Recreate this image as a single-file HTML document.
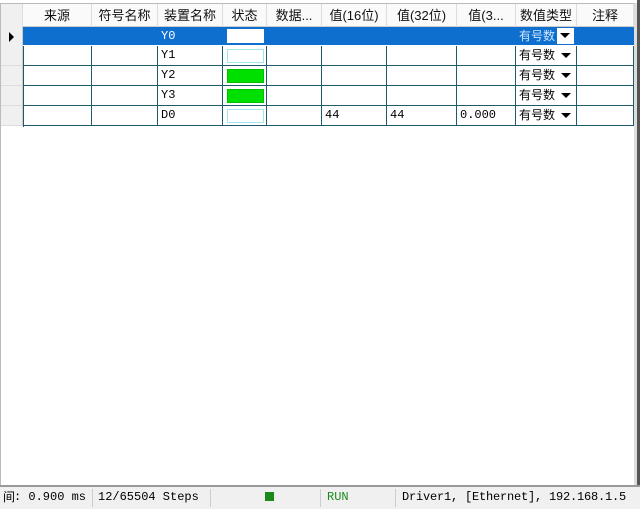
<!DOCTYPE html>
<html><head><meta charset="utf-8"><style>
body{margin:0;width:640px;height:509px;background:#fff;position:relative;overflow:hidden;font-family:"Liberation Mono","Noto Sans CJK SC",monospace;font-size:12px;color:#000}
div{position:absolute;box-sizing:border-box}
.h{top:4px;height:23px;line-height:23px;text-align:center;border-right:1px solid #ddd;font-family:"Liberation Sans","Noto Sans CJK SC",sans-serif;font-size:13px;color:#111}
.c{height:20px;line-height:19px;border-right:1px solid #1f5a6a;border-bottom:1px solid #1f5a6a;padding-left:3px;white-space:nowrap;overflow:hidden}
.rh{left:1px;width:22px;height:20px;background:#f0f0f0;border-bottom:1px solid #ddd;border-right:1px solid #ccc}
.st{left:227px;width:37px;height:14px;border:1px solid #a0e8f0;background:#fff}
.ty{font-family:"Liberation Sans","Noto Sans CJK SC",sans-serif;font-size:12px}
.arr{display:inline-block;width:0;height:0;border-left:5px solid transparent;border-right:5px solid transparent;border-top:5px solid #000;margin-left:6px;vertical-align:middle}
.sb{position:absolute}
</style></head><body>
<div style="left:0;top:3px;width:640px;height:1px;background:#bbb"></div>
<div style="left:0;top:3px;width:1px;height:484px;background:#bbb"></div>
<div style="left:637px;top:0;width:3px;height:487px;background:#555"></div>
<div style="left:634px;top:3px;width:3px;height:484px;background:#ddd"></div>
<div style="left:1px;top:4px;width:633px;height:23px;background:#fafafa;border-bottom:1px solid #ccc"></div>
<div class="h" style="left:1px;width:22px;background:#f0f0f0"></div>
<div class="h" style="left:23px;width:69px">来源</div>
<div class="h" style="left:92px;width:66px">符号名称</div>
<div class="h" style="left:158px;width:65px">装置名称</div>
<div class="h" style="left:223px;width:44px">状态</div>
<div class="h" style="left:267px;width:55px">数据...</div>
<div class="h" style="left:322px;width:65px">值(16位)</div>
<div class="h" style="left:387px;width:70px">值(32位)</div>
<div class="h" style="left:457px;width:59px">值(3...</div>
<div class="h" style="left:516px;width:61px">数值类型</div>
<div class="h" style="left:577px;width:57px">注释</div>

<div class="rh" style="top:27px"></div>
<div style="left:9px;top:32px;width:0;height:0;border-top:5px solid transparent;border-bottom:5px solid transparent;border-left:5px solid #000"></div>
<div style="left:23px;top:27px;width:611px;height:19px;background:#0f6fcf;border-bottom:1px solid #fff"></div>
<div style="left:161px;top:27px;height:19px;line-height:19px;color:#fff">Y0</div>
<div class="st" style="top:29px;border-color:#fff"></div>
<div class="ty" style="left:519px;top:27px;height:19px;line-height:19px;color:#cfe8ff">有号数</div>
<div style="left:557px;top:28px;width:17px;height:16px;background:#fff"><span class="arr" style="margin-left:3px;margin-top:5px;vertical-align:top"></span></div>

<div class="rh" style="top:46px"></div><div class="rh" style="top:66px"></div><div class="rh" style="top:86px"></div><div class="rh" style="top:106px"></div>
<div style="left:23px;top:46px;width:611px;height:81px;border-left:1px solid #1f5a6a"></div>
<script>
var cols=[[23,92],[92,158],[158,223],[223,267],[267,322],[322,387],[387,457],[457,516],[516,577],[577,634]];
var data=[["","","Y1","","","","","","有号数",""],["","","Y2","","","","","","有号数",""],["","","Y3","","","","","","有号数",""],["","","D0","","","44","44","0.000","有号数",""]];
var h="";
data.forEach(function(r,i){var t=46+i*20;cols.forEach(function(c,j){var txt=r[j];if(j==8)txt='<span class="ty">'+txt+'</span><span class="arr"></span>';h+='<div class="c" style="left:'+c[0]+'px;top:'+t+'px;width:'+(c[1]-c[0])+'px">'+txt+'</div>';});});
document.write(h);
</script>
<div class="st" style="top:49px"></div>
<div class="st" style="top:69px;background:#00e000;border-color:#00c000"></div>
<div class="st" style="top:89px;background:#00e000;border-color:#00c000"></div>
<div class="st" style="top:109px"></div>

<div style="left:0;top:485px;width:640px;height:24px;background:#f0f0f0;border-top:2px solid #999;line-height:21px">
<span class="sb ty" style="left:3px">间</span>
<span class="sb" style="left:14px">: 0.900 ms</span>
<div style="left:92px;top:2px;width:1px;height:18px;background:#ccc"></div>
<span class="sb" style="left:98px">12/65504 Steps</span>
<div style="left:210px;top:2px;width:1px;height:18px;background:#ccc"></div>
<div style="left:265px;top:5px;width:9px;height:9px;background:#1a8a1a"></div>
<div style="left:320px;top:2px;width:1px;height:18px;background:#ccc"></div>
<span class="sb" style="left:327px;color:#1a8a1a">RUN</span>
<div style="left:395px;top:2px;width:1px;height:18px;background:#ccc"></div>
<span class="sb" style="left:402px;letter-spacing:-0.2px">Driver1, [Ethernet], 192.168.1.5</span>
</div>
</body></html>
